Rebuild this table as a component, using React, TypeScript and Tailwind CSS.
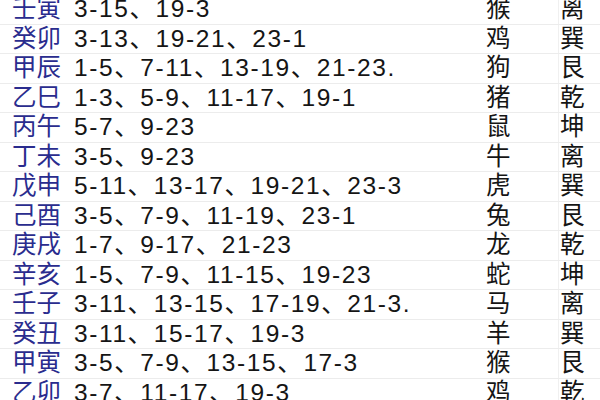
const rows: Array<[string, string, string, string]> = [
  ['壬寅', '3-15、19-3', '猴', '离'],
  ['癸卯', '3-13、19-21、23-1', '鸡', '巽'],
  ['甲辰', '1-5、7-11、13-19、21-23.', '狗', '艮'],
  ['乙巳', '1-3、5-9、11-17、19-1', '猪', '乾'],
  ['丙午', '5-7、9-23', '鼠', '坤'],
  ['丁未', '3-5、9-23', '牛', '离'],
  ['戊申', '5-11、13-17、19-21、23-3', '虎', '巽'],
  ['己酉', '3-5、7-9、11-19、23-1', '兔', '艮'],
  ['庚戌', '1-7、9-17、21-23', '龙', '乾'],
  ['辛亥', '1-5、7-9、11-15、19-23', '蛇', '坤'],
  ['壬子', '3-11、13-15、17-19、21-3.', '马', '离'],
  ['癸丑', '3-11、15-17、19-3', '羊', '巽'],
  ['甲寅', '3-5、7-9、13-15、17-3', '猴', '艮'],
  ['乙卯', '3-7、11-17、19-3', '鸡', '乾'],
];

export default function App() {
  return (
    <div
      className="h-[400px] w-[600px] overflow-hidden bg-white text-[24.5px] leading-none"
      style={{ fontFamily: '"Liberation Sans", "Noto Sans CJK SC", sans-serif' }}
    >
      <div className="-mt-[5px]">
        {rows.map(([ganzhi, hours, animal, gua], i) => (
          <div key={i} className="flex h-[29.5px] items-center border-b border-[#ececec]">
            <div className="w-[74px] shrink-0 pl-[12px] text-[#2a2c8e]">{ganzhi}</div>
            <div className="flex-1 tracking-[1.6px] text-[#151515]">{hours}</div>
            <div className="w-[74px] shrink-0 pl-[2px] text-[#151515]">{animal}</div>
            <div className="flex h-full w-[42px] shrink-0 items-center border-l border-[#f0f0f0] pl-[1px] text-[#151515]">
              {gua}
            </div>
          </div>
        ))}
      </div>
    </div>
  );
}
